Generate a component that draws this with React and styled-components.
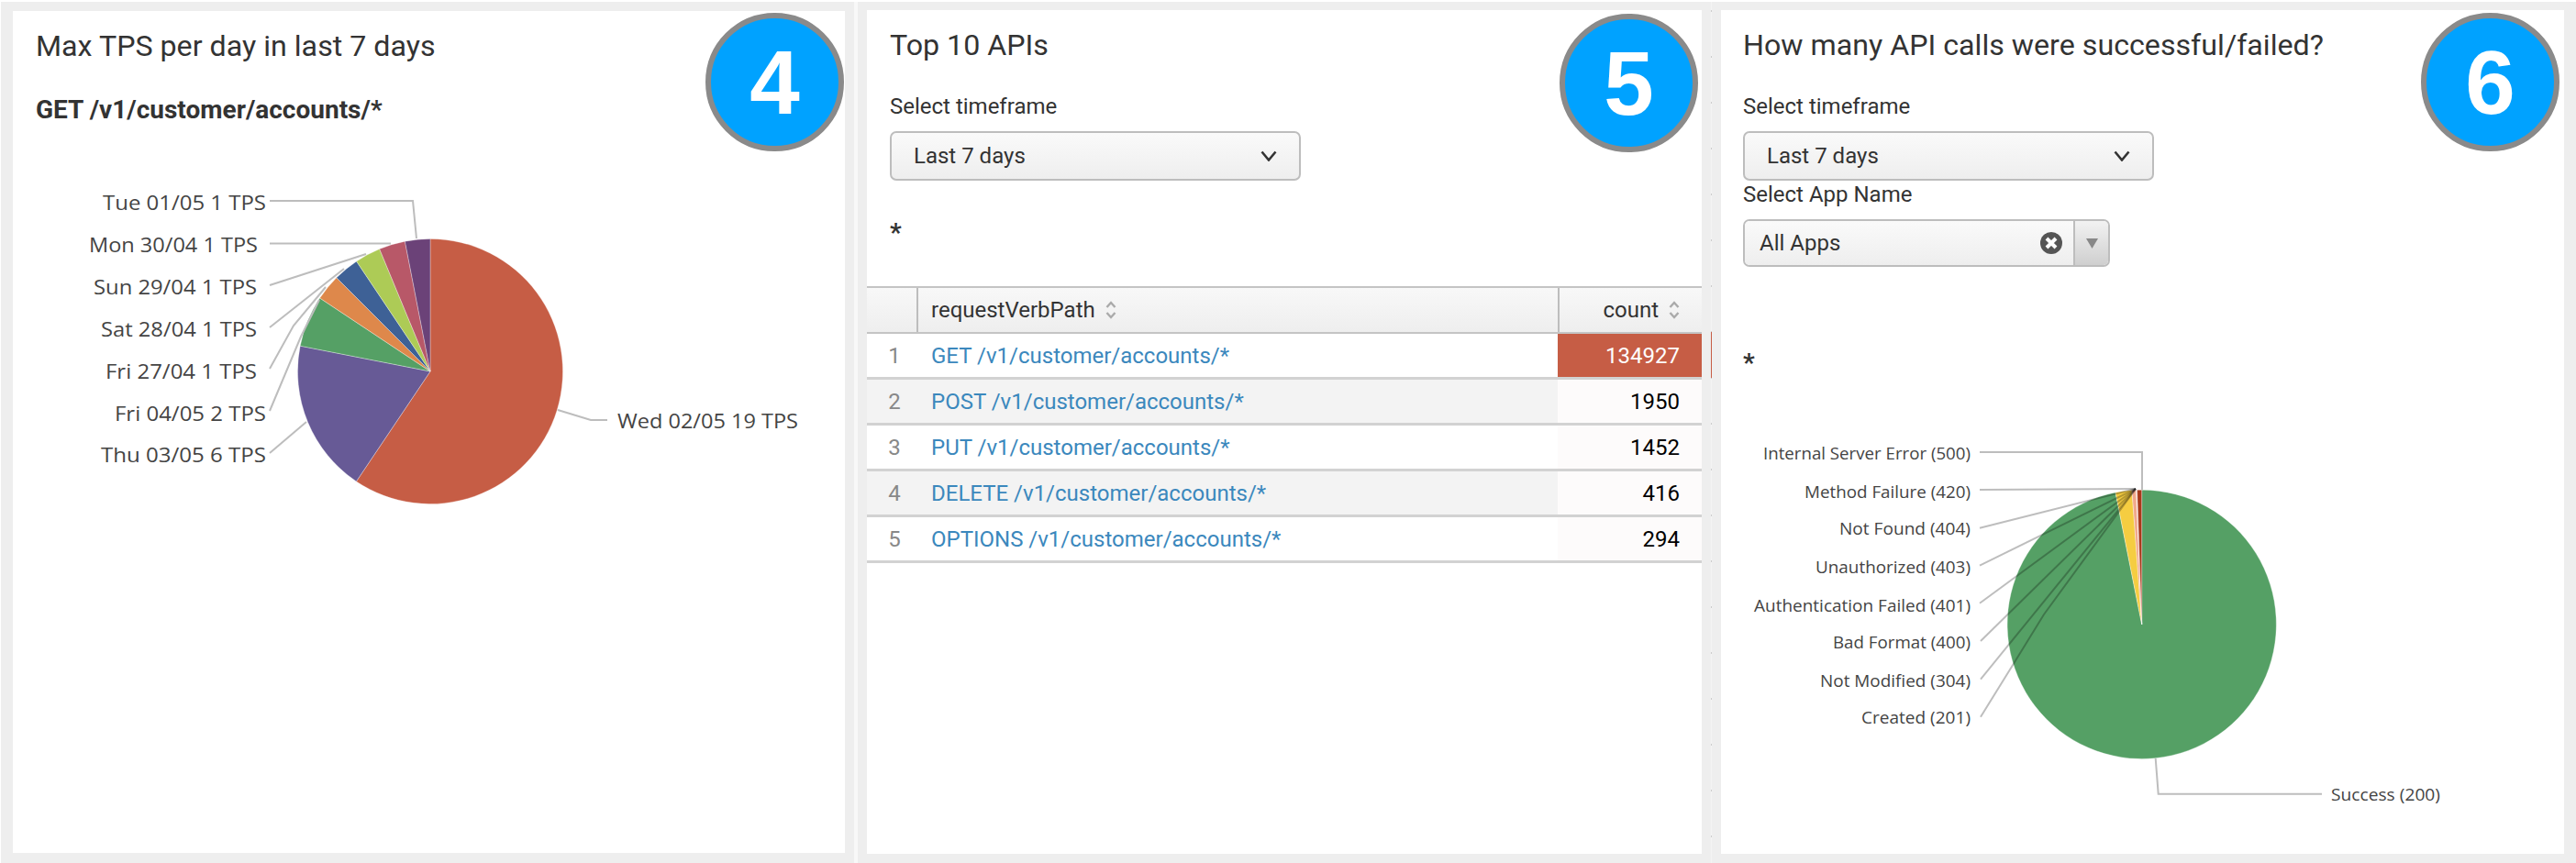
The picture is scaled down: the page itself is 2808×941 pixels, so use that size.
import React from "react";
import styled, { createGlobalStyle } from "styled-components";

const Global = createGlobalStyle`
  html, body { margin: 0; padding: 0; background: #fff; overflow: hidden; }
  * { box-sizing: border-box; }
`;

const Page = styled.div`
  display: flex;
  align-items: stretch;
  gap: 10px;
  width: 2807px;
  height: 939px;
  margin: 2px 0 0 1px;
  padding: 9px 13px 10px 13px;
  background: #eeeeee;
  font-family: Roboto, "Liberation Sans", sans-serif;
  color: #333;
  overflow: hidden;
`;

const Panel = styled.section`
  position: relative;
  flex: 0 0 ${(p) => p.$width}px;
  margin-top: ${(p) => p.$shift || 0}px;
  margin-bottom: ${(p) => p.$shift || 0}px;
  padding-top: 20px;
  background: #fff;
  display: flex;
  flex-direction: column;
`;

const Strip = styled.div`
  flex: 0 0 ${(p) => p.$width}px;
  margin: -9px 0 -10px;
  background-color: #f8f8f8;
`;

const TickStrip = styled(Strip)`
  background-image:
    linear-gradient(#c65d45, #c65d45),
    linear-gradient(#cccccc 0 2px, transparent 2px);
  background-size: 100% 50px, 100% 50px;
  background-position: 0 360px, 0 309px;
  background-repeat: no-repeat, repeat-y;
  background-color: #f4f4f4;
`;

const Badge = styled.div`
  position: absolute;
  top: ${(p) => p.$top}px;
  right: ${(p) => p.$right}px;
  width: 151px;
  height: 151px;
  border-radius: 50%;
  border: 6px solid #8a8a8a;
  background: #00a2ff;
  color: #fff;
  display: flex;
  align-items: center;
  justify-content: center;
  font: 700 98px "Liberation Sans", Arial, sans-serif;
  line-height: 1;
`;

const Head = styled.div`
  padding-left: ${(p) => p.$pad}px;
`;

const Title = styled.h2`
  margin: 0;
  font-size: 32.2px;
  line-height: 36px;
  font-weight: 400;
  color: #333;
`;

const Subtitle = styled.h3`
  margin: ${(p) => p.$gap}px 0 0;
  font-size: 28px;
  line-height: 30px;
  font-weight: 700;
  color: #333;
`;

const FieldLabel = styled.div`
  margin-top: ${(p) => p.$gap}px;
  margin-bottom: 13px;
  font-size: 24px;
  line-height: 28px;
  color: #333;
`;

const SelectButton = styled.div`
  width: 448px;
  height: 54px;
  padding: 0 24px 0 24px;
  display: flex;
  align-items: center;
  justify-content: space-between;
  border: 2px solid #bdbdbd;
  border-radius: 7px;
  background: linear-gradient(#fafafa, #eeeeee);
  font-size: 24px;
  color: #333;
`;

const ComboBox = styled.div`
  width: 400px;
  height: 52px;
  display: flex;
  border: 2px solid #bdbdbd;
  border-radius: 7px;
  overflow: hidden;
  font-size: 24px;
  color: #333;
`;

const ComboValue = styled.div`
  flex: 1;
  padding: 0 12px 0 16px;
  display: flex;
  align-items: center;
  justify-content: space-between;
  background: linear-gradient(#fafafa, #eeeeee);
`;

const ComboArrow = styled.div`
  flex: 0 0 38px;
  display: flex;
  align-items: center;
  justify-content: center;
  border-left: 2px solid #bdbdbd;
  background: linear-gradient(#f2f2f2, #cfcfcf);
`;

const Star = styled.div`
  margin-top: ${(p) => p.$gap}px;
  font-size: 28px;
  line-height: 30px;
  font-weight: 700;
  color: #333;
`;

const Table = styled.div`
  margin-top: 43px;
  display: flex;
  flex-direction: column;
`;

const HeaderRow = styled.div`
  display: grid;
  grid-template-columns: 54px 699px 157px;
  height: 52px;
  border-top: 2px solid #c4c4c4;
  border-bottom: 2px solid #c4c4c4;
  background: linear-gradient(#f8f8f8, #eeeeee);
  font-size: 24px;
  color: #333;
`;

const HeaderCell = styled.div`
  display: flex;
  align-items: center;
  gap: 11px;
  justify-content: ${(p) => (p.$right ? "flex-end" : "flex-start")};
  padding: ${(p) => (p.$right ? "0 24px 0 0" : "0 0 0 14px")};
  border-left: ${(p) => (p.$plain ? "none" : "2px solid #bdbdbd")};
`;

const Row = styled.div`
  display: grid;
  grid-template-columns: 54px 699px 157px;
  height: 50px;
  border-bottom: 3px solid #d2d2d2;
  background: ${(p) => (p.$even ? "#f3f3f3" : "#ffffff")};
  font-size: 24px;
`;

const IndexCell = styled.div`
  display: flex;
  align-items: center;
  justify-content: center;
  padding-left: 6px;
  color: #888;
`;

const PathCell = styled.a`
  display: flex;
  align-items: center;
  padding-left: 16px;
  color: #3b88bd;
`;

const CountCell = styled.div`
  display: flex;
  align-items: center;
  justify-content: flex-end;
  padding-right: 24px;
  color: ${(p) => (p.$hot ? "#fff" : "#000")};
  background: ${(p) => (p.$hot ? "#c65d45" : "#fdfbfb")};
`;

const Chart = styled.svg`
  display: block;
  margin-top: ${(p) => p.$gap}px;
  flex: none;
  font-family: "Open Sans", "DejaVu Sans", sans-serif;
`;

const polar = (cx, cy, r, deg) => {
  const a = (deg * Math.PI) / 180;
  return [cx + r * Math.sin(a), cy - r * Math.cos(a)];
};

const slicePath = (cx, cy, r, from, to) => {
  const [x1, y1] = polar(cx, cy, r, from);
  const [x2, y2] = polar(cx, cy, r, to);
  return `M${cx} ${cy}L${x1} ${y1}A${r} ${r} 0 ${to - from > 180 ? 1 : 0} 1 ${x2} ${y2}Z`;
};

function Pie({ cx, cy, r, slices, lines, labels, size, box, gap, lineColor, fill }) {
  return (
    <Chart
      $gap={gap}
      width={box[2]}
      height={box[3]}
      viewBox={box.join(" ")}
      aria-hidden="true"
    >
      {slices.map((s) => (
        <path
          key={s.from}
          d={slicePath(cx, cy, r, s.from, s.to)}
          fill={s.color}
          stroke="rgba(255,255,255,0.45)"
          strokeWidth="0.7"
        />
      ))}
      {lines.map((l) => (
        <polyline key={l} points={l} fill="none" stroke={lineColor} strokeWidth="2" />
      ))}
      {labels.map((t) => (
        <text
          key={t.text}
          x={t.x}
          y={t.y}
          textAnchor={t.start ? "start" : "end"}
          fontSize={size}
          fill={fill}
          textLength={t.w}
          lengthAdjust="spacingAndGlyphs"
        >
          {t.text}
        </text>
      ))}
    </Chart>
  );
}

const tpsSlices = [
  { from: 0, to: 213.9, color: "#c65d45" },
  { from: 213.9, to: 281.1, color: "#675a96" },
  { from: 281.1, to: 303.6, color: "#55a065" },
  { from: 303.6, to: 315, color: "#de884b" },
  { from: 315, to: 326.2, color: "#3e6196" },
  { from: 326.2, to: 337.5, color: "#adcb56" },
  { from: 337.5, to: 349, color: "#b85868" },
  { from: 349, to: 360, color: "#6b4278" },
];

const tpsLines = [
  "294,219 450,219 454,260",
  "294,265.5 426,265.5",
  "294,311 399,277",
  "294,357 375,293",
  "294,402 320,355 355,313",
  "294,448 328,367 348,327",
  "294,494 334,460",
  "608,447 644,458 662,458",
];

const tpsLabels = [
  { text: "Tue 01/05 1 TPS", x: 290, y: 229, w: 178 },
  { text: "Mon 30/04 1 TPS", x: 281, y: 275, w: 184 },
  { text: "Sun 29/04 1 TPS", x: 280, y: 321, w: 178 },
  { text: "Sat 28/04 1 TPS", x: 280, y: 367, w: 170 },
  { text: "Fri 27/04 1 TPS", x: 280, y: 413, w: 165 },
  { text: "Fri 04/05 2 TPS", x: 290, y: 459, w: 165 },
  { text: "Thu 03/05 6 TPS", x: 290, y: 504, w: 180 },
  { text: "Wed 02/05 19 TPS", x: 673, y: 467, w: 197, start: true },
];

const statusSlices = [
  { from: 0, to: 348.7, color: "#55a065" },
  { from: 348.7, to: 355.8, color: "#f5cd41" },
  { from: 355.8, to: 357.6, color: "#f1a88c" },
  { from: 357.6, to: 358, color: "#fde8d9" },
  { from: 358, to: 360, color: "#a8391a" },
];

const statusLines = [
  "2158,493 2335,493 2335,534",
  "2158,534 2328,533",
  "2158,575.7 2328,533",
  "2158,616.7 2328,533",
  "2158,657.7 2328,533",
  "2159,699 2328,533",
  "2159,740.7 2328,533",
  "2159,781.7 2196,722 2228,670 2328,533",
  "2349.7,827 2352.7,865.7 2531,865.7",
];

const statusLabels = [
  { text: "Internal Server Error (500)", x: 2148, y: 501, w: 226 },
  { text: "Method Failure (420)", x: 2148, y: 543, w: 181 },
  { text: "Not Found (404)", x: 2148, y: 583, w: 143 },
  { text: "Unauthorized (403)", x: 2148, y: 625, w: 169 },
  { text: "Authentication Failed (401)", x: 2148, y: 667, w: 236 },
  { text: "Bad Format (400)", x: 2148, y: 707, w: 150 },
  { text: "Not Modified (304)", x: 2148, y: 749, w: 164 },
  { text: "Created (201)", x: 2148, y: 789, w: 119 },
  { text: "Success (200)", x: 2541, y: 873, w: 119, start: true },
];

const rows = [
  ["GET /v1/customer/accounts/*", "134927"],
  ["POST /v1/customer/accounts/*", "1950"],
  ["PUT /v1/customer/accounts/*", "1452"],
  ["DELETE /v1/customer/accounts/*", "416"],
  ["OPTIONS /v1/customer/accounts/*", "294"],
];

const Chevron = () => (
  <svg width="18" height="12" viewBox="0 0 18 12" aria-hidden="true">
    <path d="M1.5 1.5 L9 10.5 L16.5 1.5" fill="none" stroke="#333" strokeWidth="2.6" />
  </svg>
);

const SortIcon = () => (
  <svg width="12" height="20" viewBox="0 0 12 20" aria-hidden="true">
    <path d="M1.5 7 L6 2 L10.5 7 M1.5 13 L6 18 L10.5 13" fill="none" stroke="#aaaaaa" strokeWidth="2.4" />
  </svg>
);

const ClearIcon = () => (
  <svg width="24" height="24" viewBox="0 0 24 24" aria-hidden="true">
    <circle cx="12" cy="12" r="12" fill="#555" />
    <path d="M7 7 L17 17 M17 7 L7 17" stroke="#fff" strokeWidth="4" />
  </svg>
);

const ArrowIcon = () => (
  <svg width="13" height="11" viewBox="0 0 13 11" aria-hidden="true">
    <path d="M0 0 H13 L6.5 11 Z" fill="#888" />
  </svg>
);

export default function App() {
  return (
    <>
      <Global />
      <Page>
        <Panel $width={907} $shift={1}>
          <Badge $top={2} $right={1}>4</Badge>
          <Head $pad={25}>
            <Title>Max TPS per day in last 7 days</Title>
            <Subtitle $gap={37}>GET /v1/customer/accounts/*</Subtitle>
          </Head>
          <Pie
            gap={55}
            box={[14, 190, 907, 430]}
            cx={469}
            cy={405}
            r={144.5}
            size={22}
            fill="#444"
            lineColor="#bdbdbd"
            slices={tpsSlices}
            lines={tpsLines}
            labels={tpsLabels}
          />
        </Panel>
        <Strip $width={4} />
        <Panel $width={910}>
          <Badge $top={4} $right={4}>5</Badge>
          <Head $pad={25}>
            <Title>Top 10 APIs</Title>
            <FieldLabel $gap={35}>Select timeframe</FieldLabel>
            <SelectButton>
              Last 7 days
              <Chevron />
            </SelectButton>
            <Star $gap={42}>*</Star>
          </Head>
          <Table>
            <HeaderRow>
              <HeaderCell $plain />
              <HeaderCell>
                requestVerbPath
                <SortIcon />
              </HeaderCell>
              <HeaderCell $right>
                count
                <SortIcon />
              </HeaderCell>
            </HeaderRow>
            {rows.map(([path, count], i) => (
              <Row key={path} $even={i % 2 === 1}>
                <IndexCell>{i + 1}</IndexCell>
                <PathCell>{path}</PathCell>
                <CountCell $hot={i === 0}>{count}</CountCell>
              </Row>
            ))}
          </Table>
        </Panel>
        <TickStrip $width={1} />
        <Panel $width={919}>
          <Badge $top={3} $right={5}>6</Badge>
          <Head $pad={24}>
            <Title>How many API calls were successful/failed?</Title>
            <FieldLabel $gap={35}>Select timeframe</FieldLabel>
            <SelectButton>
              Last 7 days
              <Chevron />
            </SelectButton>
            <FieldLabel $gap={1}>Select App Name</FieldLabel>
            <ComboBox>
              <ComboValue>
                All Apps
                <ClearIcon />
              </ComboValue>
              <ComboArrow>
                <ArrowIcon />
              </ComboArrow>
            </ComboBox>
            <Star $gap={90}>*</Star>
          </Head>
          <Pie
            gap={19}
            box={[1876, 430, 919, 470]}
            cx={2334.7}
            cy={680.8}
            r={146.6}
            size={18}
            fill="#444"
            lineColor="rgba(0,0,0,0.26)"
            slices={statusSlices}
            lines={statusLines}
            labels={statusLabels}
          />
        </Panel>
      </Page>
    </>
  );
}
